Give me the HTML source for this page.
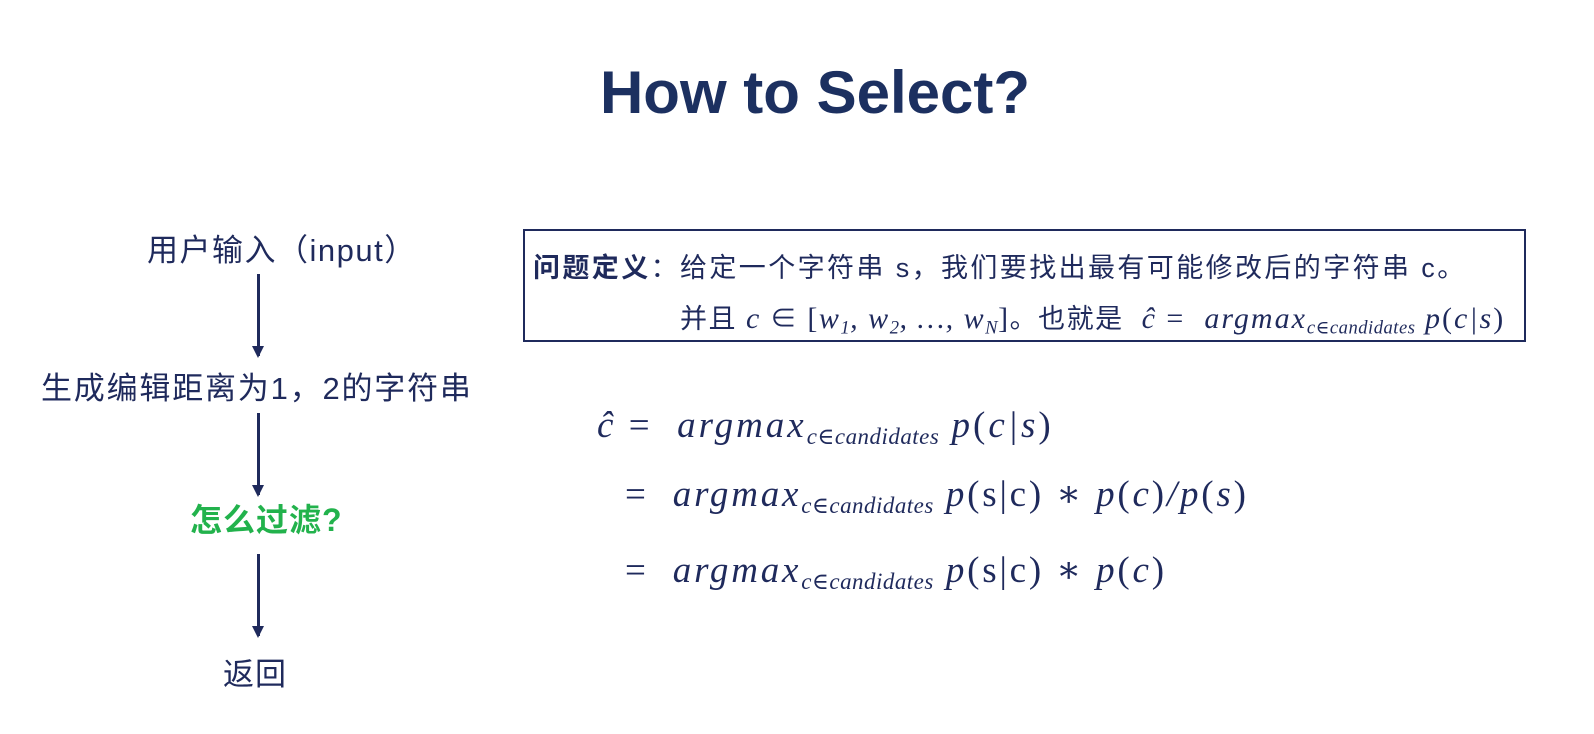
<!DOCTYPE html>
<html><head><meta charset="utf-8"><style>
body{margin:0;width:1594px;height:734px;background:#fff;position:relative;overflow:hidden;font-family:"Liberation Sans","Noto Sans CJK SC",sans-serif;color:#1f2a5c}
.a{position:absolute;white-space:nowrap}
.m{font-family:"Liberation Serif","DejaVu Serif",serif;font-style:italic}
.n{font-family:"Liberation Serif",serif;font-style:normal}
sub{font-size:0.62em;vertical-align:-0.3em;letter-spacing:0.5px}
.arr{position:absolute;left:257px;width:3px;background:#1f2a5c}
.arr:after{content:"";position:absolute;left:-5px;bottom:-2px;border-left:6.5px solid transparent;border-right:6.5px solid transparent;border-top:12px solid #1f2a5c}
</style></head><body>
<div class="a" style="left:0;width:1630px;text-align:center;top:58px;font-size:60px;font-weight:bold;color:#1c3060">How to Select?</div>

<div class="a" style="left:147px;top:225px;font-size:31px;letter-spacing:1.5px">用户输入（input）</div>
<div class="arr" style="top:274px;height:82px"></div>
<div class="a" style="left:41px;top:363px;font-size:31px;letter-spacing:1.8px">生成编辑距离为1，2的字符串</div>
<div class="arr" style="top:413px;height:82px"></div>
<div class="a" style="left:190px;top:495px;font-size:32px;font-weight:bold;color:#22b24c;letter-spacing:1px">怎么过滤?</div>
<div class="arr" style="top:554px;height:82px"></div>
<div class="a" style="left:223px;top:649px;font-size:31px;letter-spacing:1px">返回</div>

<div class="a" style="left:523px;top:229px;width:999px;height:109px;border:2px solid #1f2a5c"></div>
<div class="a" style="left:533px;top:246px;font-size:27px;letter-spacing:2.4px"><b>问题定义</b>：给定一个字符串 s，我们要找出最有可能修改后的字符串 c。</div>
<div class="a" style="left:680px;top:297px;font-size:27px;letter-spacing:1.5px">并且 <span class="m" style="font-size:30px">c</span> ∈ <span class="m" style="font-size:30px"><span class="n">[</span>w<sub>1</sub>, w<sub>2</sub>, …, w<sub>N</sub><span class="n">]</span></span>。也就是 &nbsp;<span class="m" style="font-size:30px;letter-spacing:2px">ĉ <span class="n">=</span> &nbsp;argmax<sub>c∈candidates</sub> p<span class="n">(</span>c|s<span class="n">)</span></span></div>

<div class="a m" style="left:597px;top:404px;font-size:37px;letter-spacing:3px">ĉ <span class="n">=</span> &nbsp;argmax<sub>c∈candidates</sub> p<span class="n">(</span>c|s<span class="n">)</span></div>
<div class="a m" style="left:625px;top:472px;font-size:37px;letter-spacing:2.8px"><span class="n">=</span> &nbsp;argmax<sub>c∈candidates</sub> p<span class="n">(s|c)</span> ∗ p<span class="n">(</span>c<span class="n">)</span>/p<span class="n">(</span>s<span class="n">)</span></div>
<div class="a m" style="left:625px;top:548px;font-size:37px;letter-spacing:2.8px"><span class="n">=</span> &nbsp;argmax<sub>c∈candidates</sub> p<span class="n">(s|c)</span> ∗ p<span class="n">(</span>c<span class="n">)</span></div>
</body></html>
